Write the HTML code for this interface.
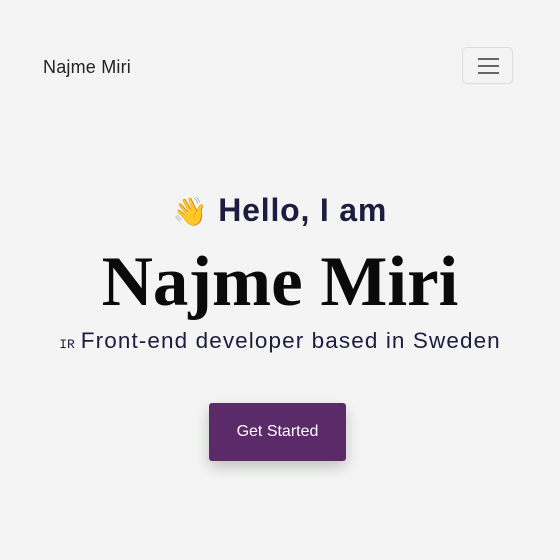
<!DOCTYPE html>
<html><head><style>
html,body{margin:0;padding:0;background:#f3f4f3;width:560px;height:560px;overflow:hidden;font-family:"Liberation Sans",sans-serif;}
.brand{position:absolute;left:43px;top:57px;font-size:18px;color:#222;letter-spacing:0.2px;}
.tog{position:absolute;left:462px;top:47px;width:51px;height:37px;border:1px solid #dcdcdc;border-radius:5px;box-sizing:border-box;}
.tog i{position:absolute;left:15px;width:21px;height:2px;background:#666;}
.hello{position:absolute;left:0;width:560px;top:192px;text-align:center;font-size:32px;font-weight:bold;color:#1f1d3f;letter-spacing:0.8px;}
.name{position:absolute;left:0;width:560px;top:242px;text-align:center;font-family:"Liberation Serif",serif;font-weight:bold;font-size:71px;color:#0a0a0a;}
.sub{position:absolute;left:0;width:560px;top:328px;text-align:center;font-size:22.5px;color:#1f1d3f;letter-spacing:1.1px;}
.sub small{font-size:13px;font-family:"Liberation Mono",monospace;margin-right:6px;letter-spacing:0;}
.btn{position:absolute;left:209px;top:403px;width:137px;height:58px;background:#5b2a69;border-radius:3px;color:#fff;font-size:16px;line-height:58px;text-align:center;box-shadow:0 6px 14px rgba(0,0,0,.2);}
</style></head><body>
<div class="brand">Najme Miri</div>
<div class="tog"><i style="top:10px"></i><i style="top:17px"></i><i style="top:24px"></i></div>
<div class="hello"><span style="font-size:28px">👋</span> Hello, I am</div>
<div class="name">Najme Miri</div>
<div class="sub"><small>IR</small>Front-end developer based in Sweden</div>
<div class="btn">Get Started</div>
</body></html>
